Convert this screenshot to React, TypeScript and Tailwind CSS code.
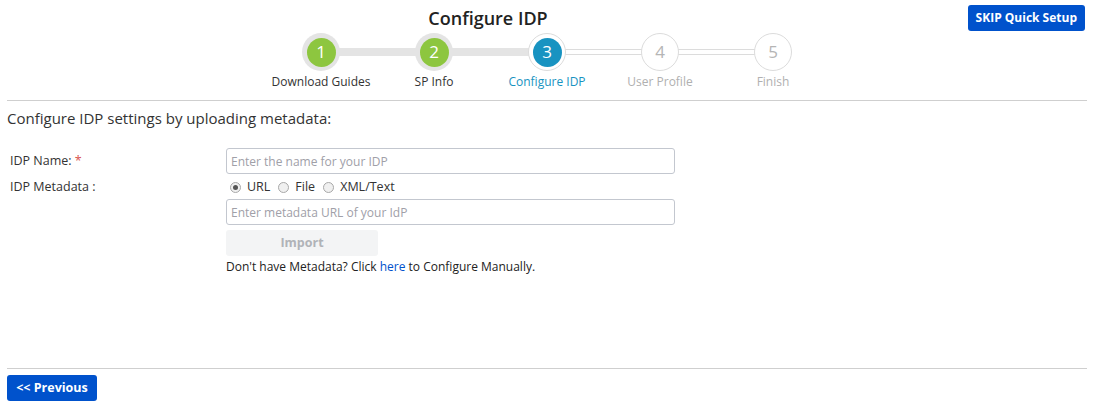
const steps = [
  { n: 1, label: "Download Guides", state: "done" },
  { n: 2, label: "SP Info", state: "done" },
  { n: 3, label: "Configure IDP", state: "active" },
  { n: 4, label: "User Profile", state: "todo" },
  { n: 5, label: "Finish", state: "todo" },
];

function Stepper() {
  return (
    <div className="flex items-start">
      {steps.map((step, i) => (
        <div key={step.n} className="relative flex w-[113px] flex-col items-center">
          {i < steps.length - 1 && (
            <div
              className={
                step.state === "done"
                  ? "absolute left-[56px] top-[15px] h-[8px] w-[113px] bg-[#e4e4e4]"
                  : "absolute left-[56px] top-[16px] h-[6px] w-[113px] border-y border-[#dcdcdc] bg-white"
              }
            />
          )}
          {step.state === "done" && (
            <div className="relative z-10 flex h-[38px] w-[38px] items-center justify-center rounded-full bg-[#e4e4e4]">
              <div className="flex h-[29px] w-[29px] items-center justify-center rounded-full bg-[#8dc63f] text-[17px] text-white">
                {step.n}
              </div>
            </div>
          )}
          {step.state === "active" && (
            <div className="relative z-10 flex h-[38px] w-[38px] items-center justify-center rounded-full border border-[#dcdcdc] bg-white">
              <div className="flex h-[29px] w-[29px] items-center justify-center rounded-full bg-[#1893c1] text-[17px] text-white">
                {step.n}
              </div>
            </div>
          )}
          {step.state === "todo" && (
            <div className="relative z-10 flex h-[38px] w-[38px] items-center justify-center rounded-full border border-[#dcdcdc] bg-white text-[17px] text-[#b5b5b5]">
              {step.n}
            </div>
          )}
          <div
            className={
              "mt-[2px] whitespace-nowrap text-[12px] " +
              (step.state === "done"
                ? "text-[#333]"
                : step.state === "active"
                  ? "text-[#1893c1]"
                  : "text-[#b0b0b0]")
            }
          >
            {step.label}
          </div>
        </div>
      ))}
    </div>
  );
}

function Radio({ label, checked }: { label: string; checked?: boolean }) {
  return (
    <label className="flex items-center gap-[6px]">
      <span className="flex h-[11px] w-[11px] items-center justify-center rounded-full border border-[#a8a8a8] bg-[#f0f0f0]">
        {checked && <span className="h-[5px] w-[5px] rounded-full bg-[#555]" />}
      </span>
      <span>{label}</span>
    </label>
  );
}

export default function App() {
  return (
    <div
      className="h-[410px] w-[1094px] bg-white px-[7px] text-[#333]"
      style={{ fontFamily: '"Open Sans", "Noto Sans", sans-serif' }}
    >
      <div className="relative flex flex-col items-center pt-[5px]">
        <h1 className="mr-[118px] text-[18px] font-semibold leading-[26px] text-[#222]">
          Configure IDP
        </h1>
        <div className="mt-[2px]">
          <Stepper />
        </div>
        <button className="absolute right-[2px] top-[5px] h-[26px] rounded-[3px] bg-[#0052cc] px-[8px] text-[12px] font-bold text-white">
          SKIP Quick Setup
        </button>
      </div>
      <div className="mt-[9px] border-t border-[#cfcfcf]" />
      <p className="mt-[7px] text-[15px] leading-[20px]">
        Configure IDP settings by uploading metadata:
      </p>
      <div className="mt-[20px] grid grid-cols-[219px_449px] gap-y-[5px] text-[12.5px]">
        <div className="pl-[3px] leading-[26px]">
          IDP Name: <span className="text-[#d9534f]">*</span>
        </div>
        <input
          className="h-[26px] rounded-[3px] border border-[#c3c7cf] px-[4px] text-[12px] placeholder:text-[#a0a0a8]"
          placeholder="Enter the name for your IDP"
        />
        <div className="pl-[3px] leading-[16px]">IDP Metadata :</div>
        <div className="flex flex-col">
          <div className="flex h-[16px] items-center gap-[8px] pl-[4px]">
            <Radio label="URL" checked />
            <Radio label="File" />
            <Radio label="XML/Text" />
          </div>
          <input
            className="mt-[4px] h-[26px] rounded-[3px] border border-[#c3c7cf] px-[4px] text-[12px] placeholder:text-[#a0a0a8]"
            placeholder="Enter metadata URL of your IdP"
          />
          <button className="mt-[5px] h-[26px] w-[152px] rounded-[3px] bg-[#f3f4f5] text-[12.5px] font-bold text-[#b0b3b8]">
            Import
          </button>
          <div className="mt-[3px] text-[12px] leading-[16px] text-[#222]">
            Don't have Metadata? Click <a className="text-[#0052cc]">here</a> to Configure Manually.
          </div>
        </div>
      </div>
      <div className="mt-[93px] border-t border-[#cfcfcf]" />
      <button className="mt-[6px] h-[26px] w-[90px] rounded-[3px] bg-[#0052cc] text-[12.5px] font-bold text-white">
        &lt;&lt; Previous
      </button>
    </div>
  );
}
